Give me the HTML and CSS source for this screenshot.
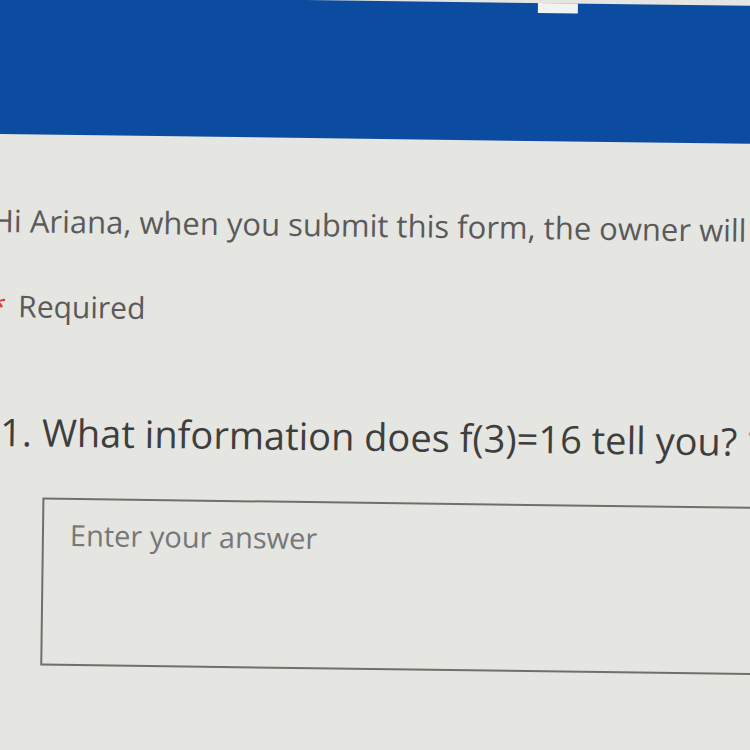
FILE: index.html
```html
<!DOCTYPE html>
<html lang="en">
  <head>
    <meta charset="UTF-8">
    <meta name="viewport" content="width=device-width, initial-scale=1.0">
    <title>Form</title>
    <link rel="stylesheet" href="styles.css">
  </head>
  <body>
    <div class="page">
      <header class="banner">
        <span class="banner-mark"></span>
      </header>

      <main class="form-body">
        <p class="notice">Hi Ariana, when you submit this form, the owner will</p>
        <p class="required"><span class="star">*</span> Required</p>

        <div class="question">
          <h2 class="question-title">1. What information does f(3)=16 tell you? <span class="star">*</span></h2>
          <textarea class="answer" placeholder="Enter your answer"></textarea>
        </div>
      </main>
    </div>
  </body>
</html>
```

FILE: styles.css
```css
:root {
  --brand-blue: #0b4ca0;
  --page-bg: #e5e5e1;
  --text-muted: #5a5a5a;
  --text-dark: #3e3e3e;
  --border: #6f6f6b;
  --star: #c8433a;
}

* {
  margin: 0;
  padding: 0;
  box-sizing: border-box;
}

html, body {
  height: 100%;
  overflow: hidden;
}

body {
  font-family: 'Open Sans', 'Noto Sans', sans-serif;
  background-color: var(--page-bg);
}

/* the screen is photographed slightly tilted */
.page {
  width: 800px;
  transform-origin: 0 0;
  transform: rotate(0.75deg);
  margin-top: -4px;
}

.banner {
  height: 138px;
  background-color: var(--brand-blue);
  position: relative;
}

.banner-mark {
  position: absolute;
  left: 538px;
  top: 0;
  width: 40px;
  height: 10px;
  background: #f2f2f2;
}

.form-body {
  padding-top: 66px;
  margin-left: -6px;
}

.notice {
  font-size: 31px;
  line-height: 40px;
  color: var(--text-muted);
  white-space: nowrap;
}

.required {
  margin-top: 46px;
  font-size: 30px;
  line-height: 40px;
  color: var(--text-muted);
}

.required .star {
  margin-right: 4px;
}

.star {
  color: var(--star);
}

.question {
  margin-top: 80px;
}

.question-title {
  font-size: 38px;
  line-height: 50px;
  font-weight: 400;
  color: var(--text-dark);
  white-space: nowrap;
  padding-left: 12px;
}

.question-title .star {
  color: #8a8a8a;
}

.answer {
  display: block;
  margin-top: 41px;
  margin-left: 55px;
  width: 760px;
  height: 168px;
  border: 2px solid var(--border);
  background: transparent;
  padding: 15px 26px;
  font-family: inherit;
  font-size: 29px;
  resize: none;
}

.answer::placeholder {
  color: #777;
}
```
